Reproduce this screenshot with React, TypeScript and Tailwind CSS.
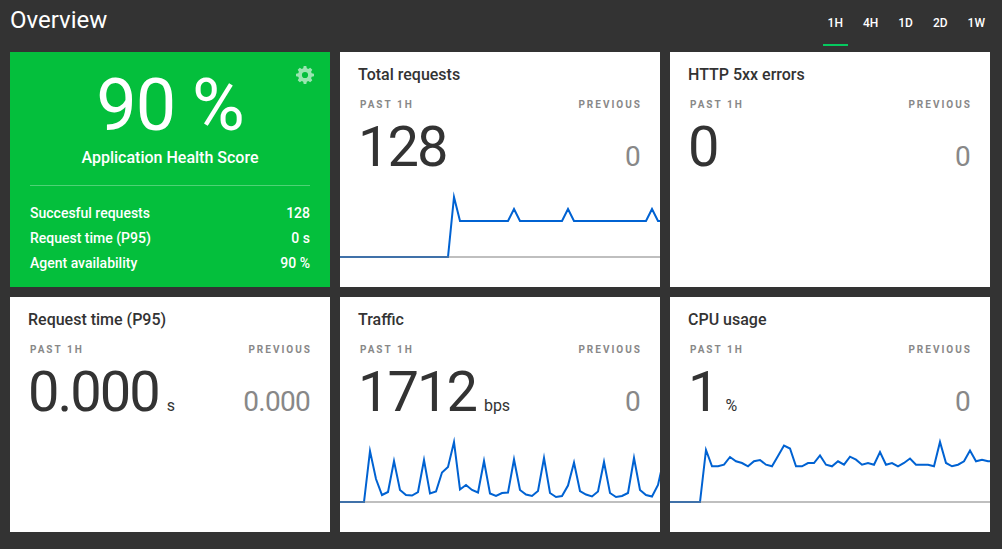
import { useState } from "react";

type Metric = {
  title: string;
  value: string;
  unit?: string;
  previous: string;
  series?: number[];
};

const PERIODS = ["1H", "4H", "1D", "2D", "1W"];

const SUMMARY = [
  { label: "Succesful requests", value: "128" },
  { label: "Request time (P95)", value: "0 s" },
  { label: "Agent availability", value: "90 %" },
];

// Series values are heights above the zero line, one sample every 6 units.
const repeat = (value: number, count: number): number[] => Array(count).fill(value);

const REQUESTS = [
  ...repeat(0, 19), 60, ...repeat(36, 9), 48, ...repeat(36, 8), 48, ...repeat(36, 13), 48, 36, 36,
];

const TRAFFIC = [
  0, 0, 0, 0, 0, 51, 23, 7, 10, 41, 12, 7, 6.5, 10, 42, 8.5, 10.5, 29.5, 35, 60, 12.5, 17,
  12, 9.5, 41, 8.5, 6, 9, 9.5, 42.5, 12, 7.5, 6, 11, 44, 9, 5, 6, 16.5, 39.5, 11, 7.5, 5.5, 10.5,
  40, 9, 5, 6, 9, 44, 12, 7, 5.5, 17, 44,
];

const CPU = [
  0, 0, 0, 0, 0, 0, 52, 35.7, 35.7, 37.3, 45, 40.7, 39, 35.7, 40.7, 42, 37.3, 35.7, 46, 56.5, 53.5,
  35.7, 35.7, 39, 39, 46.5, 37.3, 35.7, 40.7, 37.3, 45.3, 42.3, 37.3, 39, 37.3, 50, 37.3, 39, 35.7,
  39, 43.5, 37.3, 37.3, 37.3, 35.7, 60, 39, 35.7, 37.3, 40.7, 51.5, 40.7, 42.3, 40.7, 41,
];

const METRICS: Metric[] = [
  { title: "Total requests", value: "128", previous: "0", series: REQUESTS },
  { title: "HTTP 5xx errors", value: "0", previous: "0" },
  { title: "Request time (P95)", value: "0.000", unit: "s", previous: "0.000" },
  { title: "Traffic", value: "1712", unit: "bps", previous: "0", series: TRAFFIC },
  { title: "CPU usage", value: "1", unit: "%", previous: "0", series: CPU },
];

function Gear() {
  return (
    <svg viewBox="-9 -9 18 18" className="size-[18px]" fill="currentColor" aria-hidden="true">
      <path
        fillRule="evenodd"
        d="M-1.3-9H1.3L1.8-6.7L3.2-6.1L5.2-7.3L7.3-5.2L6.1-3.2L6.7-1.8L9-1.3V1.3L6.7 1.8L6.1 3.2L7.3 5.2L5.2 7.3L3.2 6.1L1.8 6.7L1.3 9H-1.3L-1.8 6.7L-3.2 6.1L-5.2 7.3L-7.3 5.2L-6.1 3.2L-6.7 1.8L-9 1.3V-1.3L-6.7-1.8L-6.1-3.2L-7.3-5.2L-5.2-7.3L-3.2-6.1L-1.8-6.7ZM0-3.1A3.1 3.1 0 1 0 0 3.1A3.1 3.1 0 1 0 0-3.1Z"
      />
    </svg>
  );
}

function Sparkline({ series, title }: { series: number[]; title: string }) {
  const points = series.map((value, i) => `${i * 6},${70 - value}`).join(" ");
  return (
    <svg
      viewBox="0 0 320 100"
      preserveAspectRatio="none"
      className="mt-auto block h-[100px] w-full"
      role="img"
      aria-label={title}
    >
      <polyline points={points} fill="none" stroke="#0062d2" strokeWidth="2" strokeMiterlimit="10" />
      <path d="M0 70H320" stroke="#808080" strokeOpacity="0.5" strokeWidth="2" />
    </svg>
  );
}

function MetricCard({ metric }: { metric: Metric }) {
  return (
    <section className="flex min-h-[235px] flex-col bg-white text-[#333]">
      <h2 className="px-[18px] pt-[13px] text-base leading-5 font-medium">{metric.title}</h2>
      <div className="flex justify-between pr-[18px] pl-5 pt-3 text-[10px] leading-4 font-bold tracking-[2px] text-[#888]">
        <span>PAST 1H</span>
        <span>PREVIOUS</span>
      </div>
      <div className="flex items-baseline justify-between pr-5 pl-[18px]">
        <p className="text-[56px] leading-[68px] font-normal tracking-[-2px]">
          {metric.value}
          {metric.unit && <span className="ml-2 text-base font-normal tracking-normal">{metric.unit}</span>}
        </p>
        <p className="text-[28px] font-normal tracking-tight text-[#888]">{metric.previous}</p>
      </div>
      {metric.series && <Sparkline series={metric.series} title={metric.title} />}
    </section>
  );
}

function HealthCard() {
  return (
    <section className="relative flex min-h-[235px] flex-col bg-[#04bf3c] px-5 text-white">
      <button type="button" aria-label="Settings" className="absolute top-[14px] right-4 text-white/60">
        <Gear />
      </button>
      <p className="pt-3 text-center text-[72px] leading-[84px] tracking-[-1px]">90 %</p>
      <h2 className="text-center text-base leading-5 font-medium">Application Health Score</h2>
      <dl className="mt-[17px] border-t border-white/30 pt-[15px] text-sm leading-[25px] font-medium">
        {SUMMARY.map((row) => (
          <div key={row.label} className="flex justify-between">
            <dt>{row.label}</dt>
            <dd>{row.value}</dd>
          </div>
        ))}
      </dl>
    </section>
  );
}

export default function App() {
  const [period, setPeriod] = useState("1H");
  return (
    <main className="min-h-screen bg-[#333] pr-3 pl-[10px] pb-4 font-[Roboto,sans-serif]">
      <header className="flex h-[52px] items-start justify-between">
        <h1 className="pt-1 text-2xl leading-8 text-white">Overview</h1>
        <nav className="flex gap-[10px]">
          {PERIODS.map((name) => (
            <button
              key={name}
              type="button"
              aria-pressed={period === name}
              onClick={() => setPeriod(name)}
              className={`h-[46px] border-b-2 px-[5px] pt-[2px] text-xs font-medium text-white ${
                period === name ? "border-[#05c95f]" : "border-transparent"
              }`}
            >
              {name}
            </button>
          ))}
        </nav>
      </header>
      <div className="grid grid-cols-3 gap-[10px]">
        <HealthCard />
        {METRICS.map((metric) => (
          <MetricCard key={metric.title} metric={metric} />
        ))}
      </div>
    </main>
  );
}
